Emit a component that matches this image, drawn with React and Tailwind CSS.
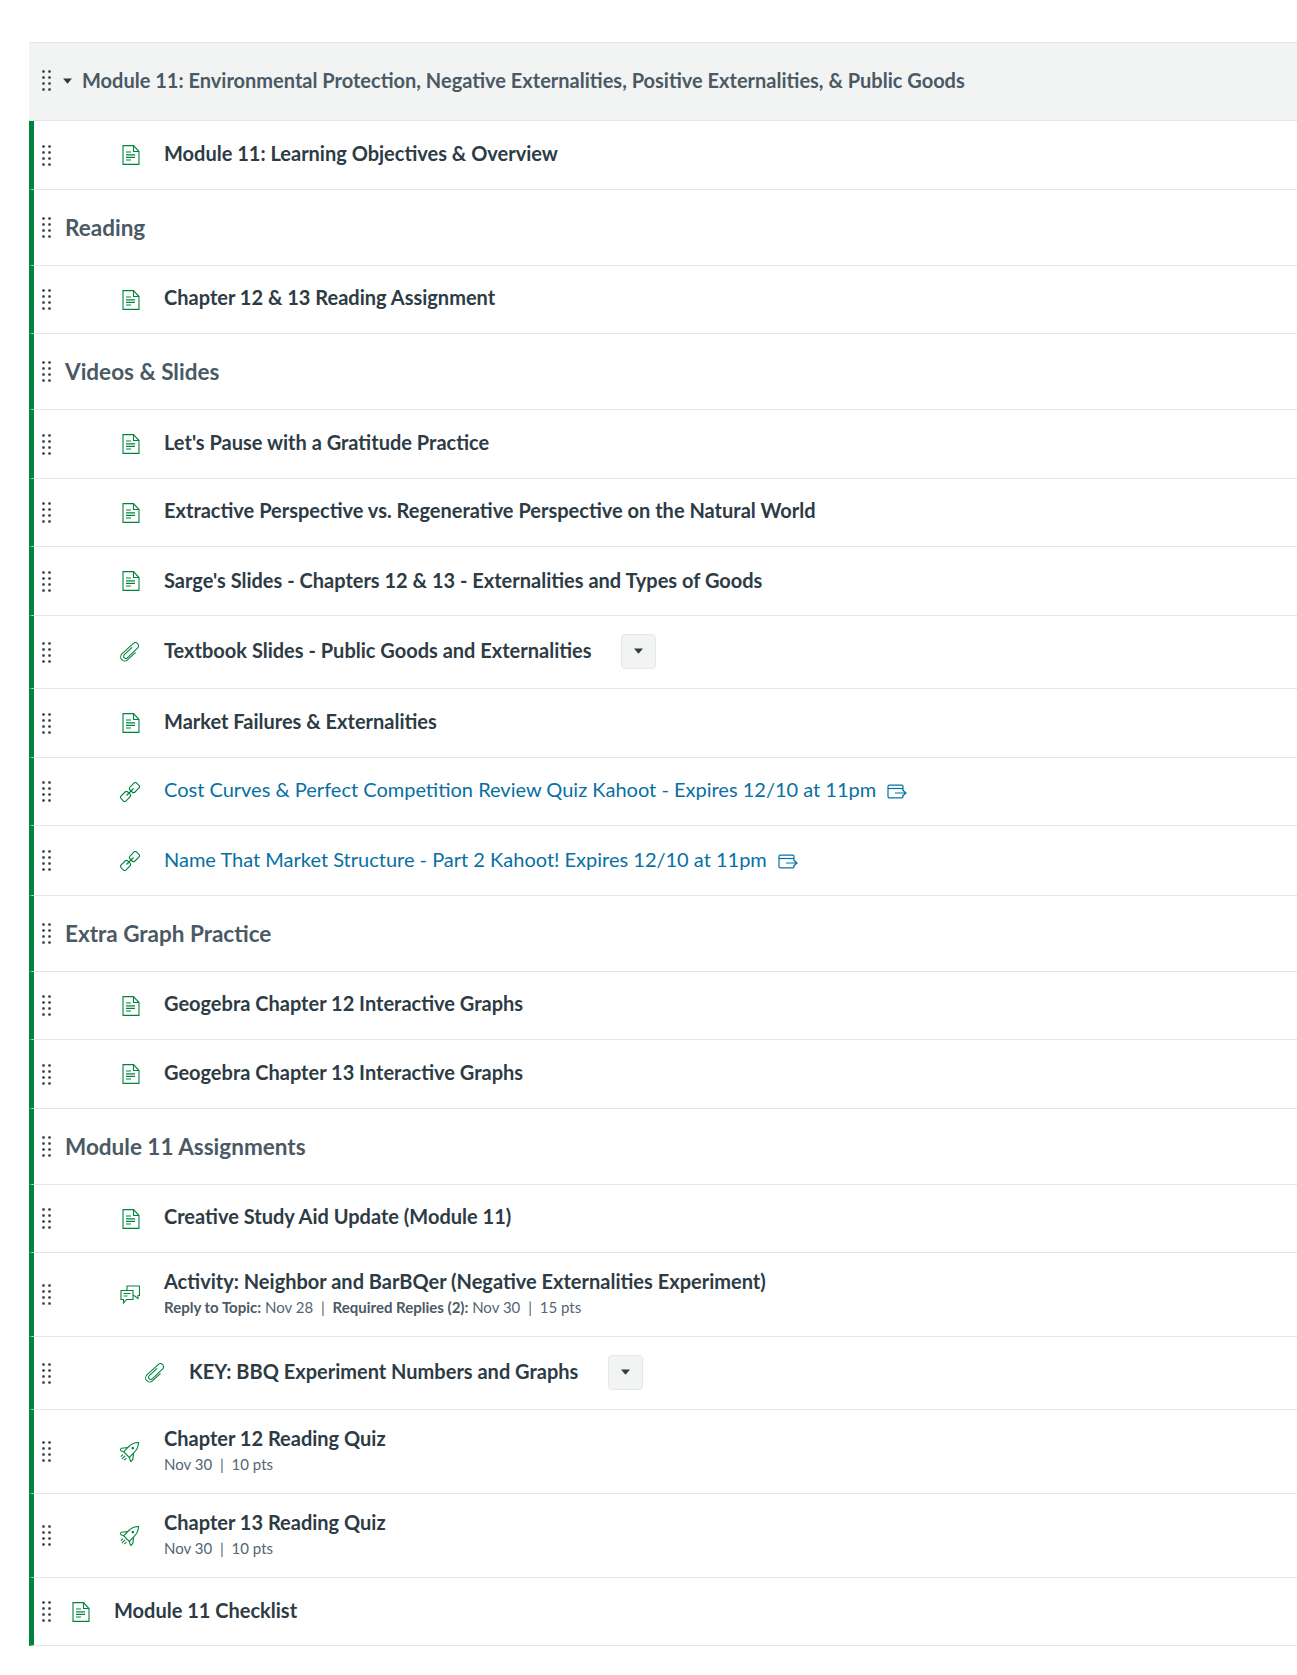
import React from 'react';

const DragHandle = () => (
    <svg width="12" height="21" viewBox="0 0 12 21" className="shrink-0" fill="#2d3b45">
        {[0.25, 6.25, 12.25, 18.25].map((y) => (
            <g key={y}>
                <rect x="1.25" y={y} width="2.5" height="2.5" rx="0.7" />
                <rect x="7.25" y={y} width="2.5" height="2.5" rx="0.7" />
            </g>
        ))}
    </svg>
);

const PageIcon = () => (
    <svg width="18" height="20" viewBox="0 0 18 20" fill="none" stroke="#00843d" strokeWidth="1.1" className="ml-[2px]">
        <path d="M1 .6h10.500L17 6.500V19.400H1z" />
        <path d="M11.500 .6v5.900H17" />
        <path d="M4 7h5M4 9.800h9M4 12.400h9M4 15h5" strokeWidth="1.200" />
    </svg>
);

const ClipIcon = () => (
    <svg width="20" height="20" viewBox="0 0 20 20" fill="none" stroke="#00843d" strokeWidth="1.1">
        <g transform="translate(10 10) rotate(47) scale(0.85) translate(-9.750 -10.500)">
            <path d="M7.500 5V17.500a2.500 2.500 0 0 0 5 0V1a3.750 3.750 0 0 0-7.500 0V19a4.750 4.750 0 0 0 9.500 0V6" strokeWidth="1.250" />
        </g>
    </svg>
);

const LinkIcon = () => (
    <svg width="20" height="20" viewBox="0 0 20 20" fill="none" stroke="#00843d" strokeWidth="1.1">
        <g transform="rotate(-45 10 10)">
            <rect x="-1" y="6.500" width="9.500" height="7" rx="2" />
            <rect x="11.500" y="6.500" width="9.500" height="7" rx="2" />
            <path d="M5 10h10" strokeWidth="1.200" />
        </g>
    </svg>
);

const DiscussionIcon = () => (
    <svg width="20" height="20" viewBox="0 0 20 20" fill="none" stroke="#00843d" strokeWidth="1.1">
        <path d="M1 5.500h12v9H6.500l-3 3.500v-3.500H1z" />
        <path d="M7 5.500V1h12.500v9.500H18v3l-4-3h-1" />
        <path d="M3.500 8.500h7M3.500 11h4" strokeWidth="1.200" />
    </svg>
);

const QuizIcon = () => (
    <svg width="20" height="21" viewBox="0 0 20 21" fill="none" stroke="#00843d" strokeWidth="1.1">
        <g transform="rotate(45 10 10)">
            <path d="M10-2C13 1 14 5 14 8V15H6V8C6 5 7 1 10-2z" />
            <path d="M6 9L2 14v3L6 15M14 9L18 14v3L14 15" />
            <circle cx="10" cy="6" r="1.300" fill="#00843d" stroke="none" />
            <path d="M7.500 17.500v3M10 17v4.500M12.500 17.500v3" />
        </g>
    </svg>
);

const ExternalIcon = () => (
    <svg width="20" height="15" viewBox="0 0 20 15" fill="none" stroke="#0770a3" strokeWidth="1.200" className="shrink-0">
        <path d="M16 6V2.500c0-.8-.5-1.300-1.300-1.300H2.300c-.8 0-1.300.5-1.300 1.300v10c0 .8.500 1.300 1.300 1.300h12.400c.8 0 1.300-.5 1.300-1.300v-1" />
        <path d="M1 4.500h15" />
        <path d="M8 9h11M15.500 6l3.500 3-3.500 3" />
    </svg>
);

const Caret = () => (
    <svg width="9" height="6" viewBox="0 0 9 6" fill="#2d3b45" className="shrink-0">
        <path d="M0 .5h9L4.500 5.800z" />
    </svg>
);

const icons = { page: PageIcon, clip: ClipIcon, link: LinkIcon, talk: DiscussionIcon, quiz: QuizIcon };

const rows = [
    { kind: 'item', icon: 'page', title: 'Module 11: Learning Objectives & Overview', h: 'h-[69px]' },
    { kind: 'head', title: 'Reading', h: 'h-[76px]' },
    { kind: 'item', icon: 'page', title: 'Chapter 12 & 13 Reading Assignment', h: 'h-[68px]', pb: 'pb-[6px]' },
    { kind: 'head', title: 'Videos & Slides', h: 'h-[76px]' },
    { kind: 'item', icon: 'page', title: "Let's Pause with a Gratitude Practice", h: 'h-[69px]' },
    { kind: 'item', icon: 'page', title: 'Extractive Perspective vs. Regenerative Perspective on the Natural World', h: 'h-[68px]', pb: 'pb-[6px]' },
    { kind: 'item', icon: 'page', title: "Sarge's Slides - Chapters 12 & 13 - Externalities and Types of Goods", h: 'h-[69px]', pb: 'pb-[2px]' },
    { kind: 'item', icon: 'clip', title: 'Textbook Slides - Public Goods and Externalities', h: 'h-[73px]', menu: 'ml-[29px]' },
    { kind: 'item', icon: 'page', title: 'Market Failures & Externalities', h: 'h-[69px]' },
    { kind: 'item', icon: 'link', title: 'Cost Curves & Perfect Competition Review Quiz Kahoot - Expires 12/10 at 11pm', h: 'h-[68px]', pb: 'pb-[6px]', external: true },
    { kind: 'item', icon: 'link', title: 'Name That Market Structure - Part 2 Kahoot! Expires 12/10 at 11pm', h: 'h-[70px]', external: true },
    { kind: 'head', title: 'Extra Graph Practice', h: 'h-[76px]' },
    { kind: 'item', icon: 'page', title: 'Geogebra Chapter 12 Interactive Graphs', h: 'h-[68px]', pb: 'pb-[6px]' },
    { kind: 'item', icon: 'page', title: 'Geogebra Chapter 13 Interactive Graphs', h: 'h-[69px]' },
    { kind: 'head', title: 'Module 11 Assignments', h: 'h-[76px]' },
    { kind: 'item', icon: 'page', title: 'Creative Study Aid Update (Module 11)', h: 'h-[68px]', pb: 'pb-[6px]' },
    { kind: 'item', icon: 'talk', title: 'Activity: Neighbor and BarBQer (Negative Externalities Experiment)', h: 'h-[84px]', reply: true },
    { kind: 'item', icon: 'clip', title: 'KEY: BBQ Experiment Numbers and Graphs', h: 'h-[73px]', menu: 'ml-[30px]', pad: 'ml-[92px]' },
    { kind: 'item', icon: 'quiz', title: 'Chapter 12 Reading Quiz', h: 'h-[84px]', meta: true },
    { kind: 'item', icon: 'quiz', title: 'Chapter 13 Reading Quiz', h: 'h-[84px]', meta: true },
    { kind: 'item', icon: 'page', title: 'Module 11 Checklist', h: 'h-[68px]', pad: 'ml-[17px]' },
];

const Row = ({ row }) => {
    if (row.kind === 'head') {
        return (
            <div className={`flex items-center border-b border-l-[5px] border-b-[#e4e6e8] border-l-[#00843d] pl-[7px] ${row.h}`}>
                <DragHandle />
                <span className="ml-[12px] text-[22.5px] font-bold text-[#4a5964]">{row.title}</span>
            </div>
        );
    }
    const Icon = icons[row.icon];
    return (
        <div className={`flex items-center border-b border-l-[5px] border-b-[#e4e6e8] border-l-[#00843d] pl-[7px] ${row.h}`}>
            <DragHandle />
            <div className={`flex w-[20px] shrink-0 ${row.pad || 'ml-[67px]'}`}>
                <Icon />
            </div>
            <div className={`ml-[24px] flex min-w-0 flex-col ${row.pb || 'pb-[4px]'}`}>
                <div className="flex items-center">
                    <span className={row.external ? 'text-[20px] text-[#0770a3]' : 'text-[20px] font-bold text-[#2d3b45]'}>{row.title}</span>
                    {row.external && <span className="ml-[11px] mt-[6px]"><ExternalIcon /></span>}
                    {row.menu && (
                        <span className={`mt-[2px] flex h-[35px] w-[35px] items-center justify-center rounded-[4px] border border-[#e4e6e8] bg-[#f2f4f4] ${row.menu}`}>
                            <Caret />
                        </span>
                    )}
                </div>
                {row.reply && (
                    <div className="text-[15px] text-[#556572]">
                        <b className="font-bold text-[#4a5964]">Reply to Topic:</b> Nov 28 <span className="mx-[4px]">|</span> <b className="font-bold text-[#4a5964]">Required Replies (2):</b> Nov 30 <span className="mx-[4px]">|</span> 15 pts
                    </div>
                )}
                {row.meta && (
                    <div className="text-[15px] text-[#556572]">
                        Nov 30 <span className="mx-[4px]">|</span> 10 pts
                    </div>
                )}
            </div>
        </div>
    );
};

export default function App() {
    return (
        <div className="min-h-[1675px] bg-white pl-[29px] pt-[42px] font-['Lato',sans-serif]">
            <div className="flex h-[79px] items-center border-y border-[#e4e6e8] bg-[#f2f4f4] pb-[2px] pl-[12px]">
                <DragHandle />
                <span className="ml-[10px]"><Caret /></span>
                <span className="ml-[10px] pb-[2px] text-[20px] font-bold text-[#4a5964]">
                    Module 11: Environmental Protection, Negative Externalities, Positive Externalities, &amp; Public Goods
                </span>
            </div>
            <div>
                {rows.map((row) => (
                    <Row key={row.title} row={row} />
                ))}
            </div>
        </div>
    );
}
